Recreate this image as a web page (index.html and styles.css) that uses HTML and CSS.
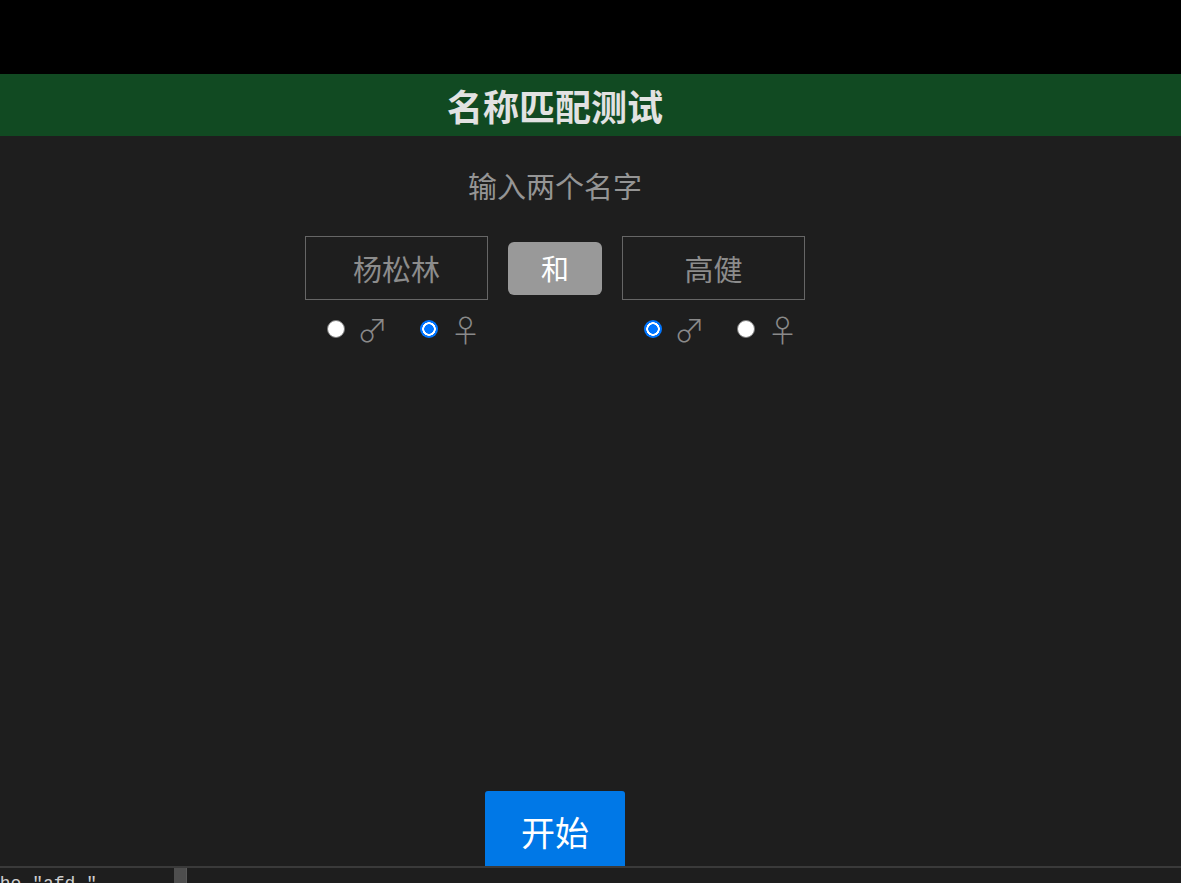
FILE: index.html
```html
<!DOCTYPE html>
<html lang="zh">
<head>
<meta charset="utf-8">
<title>名称匹配测试</title>
<link rel="stylesheet" href="styles.css">
</head>
<body>
<div class="app">
  <div class="topbar"></div>
  <header class="header">
    <div class="header-inner"><h1 class="title">名称匹配测试</h1></div>
  </header>
  <main class="main">
    <p class="subtitle">输入两个名字</p>
    <div class="pair">
      <div class="name-box">杨松林</div>
      <div class="and-btn">和</div>
      <div class="name-box">高健</div>
      <div class="gender">
        <label class="opt"><input type="radio" name="g1" class="radio"><span class="sym">♂</span></label>
        <label class="opt"><input type="radio" name="g1" class="radio" checked><span class="sym">♀</span></label>
      </div>
      <div class="gender gender-right">
        <label class="opt"><input type="radio" name="g2" class="radio" checked><span class="sym">♂</span></label>
        <label class="opt"><input type="radio" name="g2" class="radio"><span class="sym">♀</span></label>
      </div>
    </div>
    <button class="start-btn">开始</button>
  </main>
</div>
<div class="console">
  <span class="console-text">the "afd "</span>
  <span class="console-thumb"></span>
</div>
</body>
</html>
```
FILE: styles.css
```css
html, body {
  margin: 0;
  padding: 0;
  height: 100%;
  overflow: hidden;
  background: #1e1e1e;
  font-family: "Noto Sans CJK SC", "Noto Sans", sans-serif;
}

.app {
  display: flex;
  flex-direction: column;
  height: 883px;
}

.topbar {
  height: 74px;
  background: #000;
  flex: none;
}

.header {
  height: 62px;
  background: #114a22;
  flex: none;
}

.header-inner {
  width: 1110px;
  height: 100%;
  display: flex;
  align-items: center;
  justify-content: center;
}

.title {
  margin: 0;
  font-size: 36px;
  font-weight: 700;
  color: #e2e2e2;
  line-height: 1;
}

.main {
  width: 1110px;
  flex: 1;
  display: flex;
  flex-direction: column;
  align-items: center;
}

.subtitle {
  margin: 32px 0 0;
  font-size: 29px;
  line-height: 35px;
  color: #959595;
}

.pair {
  margin-top: 33px;
  display: grid;
  grid-template-columns: 183px 94px 183px;
  column-gap: 20px;
  row-gap: 13px;
  align-items: center;
}

.name-box {
  box-sizing: border-box;
  height: 64px;
  border: 1px solid #666;
  display: flex;
  align-items: center;
  justify-content: center;
  font-size: 29px;
  color: #8c8c8c;
}

.and-btn {
  height: 53px;
  border-radius: 6px;
  background: #999;
  color: #fff;
  font-size: 28px;
  display: flex;
  align-items: center;
  justify-content: center;
}

.gender {
  grid-column: 1;
  display: flex;
  justify-content: flex-start;
  gap: 33px;
  padding-left: 22px;
}

.gender-right {
  grid-column: 3;
}

.opt {
  display: flex;
  align-items: center;
  gap: 12px;
  width: 60px;
}

.radio {
  appearance: none;
  -webkit-appearance: none;
  margin: 0;
  width: 18px;
  height: 18px;
  flex: none;
  border-radius: 50%;
  box-sizing: border-box;
  background: #fff;
  border: 1px solid #7a7a7a;
}

.radio:checked {
  border: none;
  background: radial-gradient(circle, #0075ff 0 4.5px, #fff 5px 6.5px, #0075ff 7px);
}

.sym {
  font-family: "Noto Sans CJK SC", "DejaVu Sans", sans-serif;
  font-weight: 300;
  font-size: 31px;
  line-height: 32px;
  color: #8a8a8a;
}

.start-btn {
  margin-top: auto;
  margin-bottom: 12px;
  width: 140px;
  height: 80px;
  border: none;
  border-radius: 3px;
  background: #0078e7;
  color: #fff;
  font-family: "Noto Sans CJK SC", sans-serif;
  font-size: 34px;
  padding: 0;
}

.console {
  position: fixed;
  left: 0;
  right: 0;
  bottom: 0;
  height: 15px;
  border-top: 2px solid #3a3a3a;
  background: #1e1e1e;
  overflow: hidden;
}

.console-text {
  position: absolute;
  left: -11px;
  top: 6px;
  font-family: "Liberation Mono", monospace;
  font-size: 18px;
  line-height: 20px;
  color: #cfcfcf;
  white-space: pre;
}

.console-thumb {
  position: absolute;
  left: 174px;
  top: 0;
  bottom: 0;
  width: 12px;
  background: #4e4e4e;
  border-right: 1px solid #5a5a5a;
}
```
